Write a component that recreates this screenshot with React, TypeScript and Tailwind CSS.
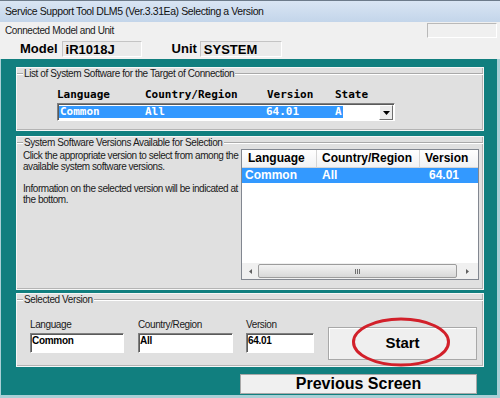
import React from "react";

const sans = "font-['Liberation_Sans',Arial,sans-serif]";
const mono = "font-['DejaVu_Sans_Mono',monospace]";

function Etch({ className = "" }: { className?: string }) {
  return <div className={`h-[2px] border-t border-b border-t-[#a9a9a9] border-b-white ${className}`} />;
}

function Legend({ text, h = "h-[12px]" }: { text: string; h?: string }) {
  return (
    <div className={`flex ${h} items-center`}>
      <Etch className="w-[6px]" />
      <span className="px-[1px] text-[10px] leading-[12px] tracking-[-0.4px] text-[#1a1a1a]">{text}</span>
      <Etch className="flex-1" />
    </div>
  );
}

function Panel({ className, children }: { className: string; children: React.ReactNode }) {
  return (
    <div
      className={`flex flex-col border border-[#f6f6f6] bg-[#e0e0e0] shadow-[inset_-1px_-1px_0_#b4b4b4] ${className}`}
    >
      {children}
    </div>
  );
}

function Field({ label, value, w, ml }: { label: string; value: string; w: string; ml: string }) {
  return (
    <div className={`flex flex-col ${w} ${ml}`}>
      <div className="h-[12px] text-[10px] leading-[12px] tracking-[-0.4px] text-[#1a1a1a]">{label}</div>
      <div className="mt-[2px] h-[20px] border border-t-[#808080] border-l-[#808080] border-b-white border-r-white bg-white pl-[1px] pt-[1px] text-[10px] font-bold leading-[12px] tracking-[-0.3px] text-black shadow-[inset_1px_1px_0_#5a5a5a]">
        {value}
      </div>
    </div>
  );
}

export default function App() {
  return (
    <div className={`flex h-[398px] w-[500px] flex-col overflow-hidden bg-[#f0f0f0] ${sans}`}>
      {/* title bar */}
      <div className="flex h-[22px] items-center border-t border-[#6d7b8a] bg-gradient-to-b from-[#d9e5f3] to-[#c3d5ea] pl-[5px] text-[10.5px] tracking-[-0.4px] text-[#111]">
        Service Support Tool DLM5 (Ver.3.31Ea) Selecting a Version
      </div>

      {/* connected model row */}
      <div className="flex h-[16px] items-center pl-[5px] text-[10px] tracking-[-0.4px] text-[#1a1a1a]">
        <span>Connected Model and Unit</span>
        <div className="ml-auto mr-[3px] h-[15px] w-[70px] border border-t-[#b9b9b9] border-l-[#b9b9b9] border-b-white border-r-white bg-[#f0f0f0]" />
      </div>

      <div className="flex h-[21px] items-start pl-[20px] pt-[3px] text-[13px] font-bold text-black">
        <span className="leading-[16px]">Model</span>
        <div className="ml-[4px] h-[16px] w-[80px] border border-t-[#c4c4c4] border-l-[#c4c4c4] border-b-white border-r-white bg-[#ebebeb] pl-[3px] leading-[15px]">
          iR1018J
        </div>
        <span className="ml-[30px] leading-[16px]">Unit</span>
        <div className="ml-[3px] h-[16px] w-[82px] border border-t-[#c4c4c4] border-l-[#c4c4c4] border-b-white border-r-white bg-[#ebebeb] pl-[3px] leading-[15px]">
          SYSTEM
        </div>
      </div>

      {/* teal body */}
      <div className="flex flex-1 flex-col border-b-[3px] border-l border-r-[3px] border-[#a9d0d6] bg-[#117f7f] pl-[15px] pr-[13px] pt-[8px]">
        <Panel className="h-[64px]">
          <Legend text="List of System Software for the Target of Connection" />
          <div className={`mt-[9px] flex h-[12px] pl-[40px] text-[11px] font-bold leading-[12px] text-black ${mono}`}>
            <span className="w-[88px]">Language</span>
            <span className="w-[122px]">Country/Region</span>
            <span className="w-[68px]">Version</span>
            <span>State</span>
          </div>
          <div className="ml-[40px] mt-[2px] flex h-[18px] w-[338px] items-start border border-t-[#808080] border-l-[#808080] border-b-white border-r-white bg-white shadow-[inset_1px_1px_0_#5a5a5a]">
            <div className={`ml-[1px] mt-[2px] flex h-[12px] w-[284px] bg-[#3399ff] pl-[1px] text-[11px] font-bold leading-[12px] text-white ${mono}`}>
              <span className="w-[85px]">Common</span>
              <span className="w-[121px]">All</span>
              <span className="w-[69px]">64.01</span>
              <span>A</span>
            </div>
            <div className="ml-auto mr-[1px] mt-[1px] flex h-[15px] w-[14px] items-center justify-center border border-t-white border-l-white border-b-[#707070] border-r-[#707070] bg-[#ececec]">
              <svg width="7" height="4" viewBox="0 0 7 4">
                <path d="M0 0h7L3.5 4z" fill="#000" />
              </svg>
            </div>
          </div>
        </Panel>

        <Panel className="mt-[5px] h-[154px]">
          <Legend text="System Software Versions Available for Selection" />
          <div className="flex flex-1">
            <div className="w-[224px] pl-[6px] pt-[1px] text-[10px] leading-[11px] tracking-[-0.45px] text-[#1a1a1a]">
              <div>Click the appropriate version to select from among the</div>
              <div>available system software versions.</div>
              <div className="h-[11px]" />
              <div>Information on the selected version will be indicated at</div>
              <div>the bottom.</div>
            </div>
            <div className="flex h-[131px] w-[238px] flex-col border border-[#828790] bg-white">
              <div className="flex h-[18px] text-[12px] font-bold leading-[17px] text-black">
                <div className="w-[75px] border-b border-r border-[#d5d5d5] bg-gradient-to-b from-white to-[#f1f2f4] pl-[6px]">Language</div>
                <div className="w-[103px] border-b border-r border-[#d5d5d5] bg-gradient-to-b from-white to-[#f1f2f4] pl-[5px]">Country/Region</div>
                <div className="flex-1 overflow-hidden border-b border-[#d5d5d5] bg-gradient-to-b from-white to-[#f1f2f4] pl-[5px]">Version</div>
              </div>
              <div className="flex h-[15px] bg-[#3399ff] text-[12px] font-bold leading-[15px] text-white">
                <span className="w-[75px] pl-[3px]">Common</span>
                <span className="w-[103px] pl-[5px]">All</span>
                <span className="pl-[9px]">64.01</span>
              </div>
              <div className="flex-1" />
              <div className="flex h-[16px] items-center bg-[#f0f0f0]">
                <div className="flex w-[16px] justify-center">
                  <svg width="3" height="5" viewBox="0 0 3 5">
                    <path d="M3 0v5L0 2.5z" fill="#606060" />
                  </svg>
                </div>
                <div className="flex h-[14px] flex-1 items-center justify-center gap-[1px] rounded-[2px] border border-[#9c9c9c] bg-gradient-to-b from-[#f3f3f3] to-[#d8d8d8]">
                  <span className="h-[5px] w-px bg-[#707070]" />
                  <span className="h-[5px] w-px bg-[#707070]" />
                  <span className="h-[5px] w-px bg-[#707070]" />
                </div>
                <div className="flex w-[21px] justify-center">
                  <svg width="3" height="5" viewBox="0 0 3 5">
                    <path d="M0 0v5L3 2.5z" fill="#606060" />
                  </svg>
                </div>
              </div>
            </div>
          </div>
        </Panel>

        <Panel className="mt-[3px] h-[74px]">
          <Legend text="Selected Version" h="h-[11px]" />
          <div className="mt-[14px] flex items-start pl-[13px]">
            <Field label="Language" value="Common" w="w-[94px]" ml="" />
            <Field label="Country/Region" value="All" w="w-[95px]" ml="ml-[14px]" />
            <Field label="Version" value="64.01" w="w-[68px]" ml="ml-[13px]" />
            <div className="relative ml-[14px] mt-[8px] flex h-[33px] w-[149px] items-center justify-center border border-[#a8a8a8] bg-[#efefef] text-[15px] font-bold text-black shadow-[inset_1px_1px_0_#ffffff]">
              Start
              <svg
                className="absolute left-[21px] top-[-12px]"
                width="102"
                height="52"
                viewBox="0 0 102 52"
              >
                <ellipse cx="51" cy="26" rx="47.5" ry="23" fill="none" stroke="#d2202a" strokeWidth="3" />
              </svg>
            </div>
          </div>
        </Panel>

        <div className="mr-[7px] mt-[7px] flex h-[20px] w-[237px] items-center justify-center self-end border border-[#a8a8a8] bg-[#f0f0f0] text-[16px] font-bold leading-[18px] text-black">
          Previous Screen
        </div>
      </div>
    </div>
  );
}
